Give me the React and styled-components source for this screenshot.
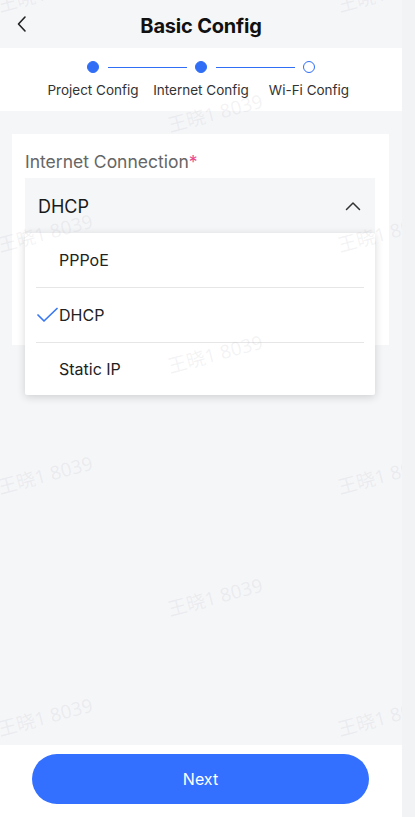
import styled, { createGlobalStyle } from "styled-components";

const GlobalStyle = createGlobalStyle`
  html, body {
    margin: 0;
    padding: 0;
    background: #f2f3f5;
  }
  body {
    font-family: Inter, "Noto Sans", "Noto Sans CJK SC", sans-serif;
    color: #1f1f1f;
  }
  * { box-sizing: border-box; }
`;

const Page = styled.div`
  position: relative;
  width: 402px;
  min-height: 817px;
  background: #f5f6f8;
  display: flex;
  flex-direction: column;
  overflow: hidden;
`;

const Header = styled.header`
  height: 48px;
  display: flex;
  align-items: center;
  justify-content: center;
  position: relative;
`;

const BackButton = styled.button`
  position: absolute;
  left: 10px;
  top: 12px;
  width: 24px;
  height: 24px;
  border: 0;
  background: none;
  padding: 0;
  display: flex;
  align-items: center;
  justify-content: center;
`;

const Title = styled.h1`
  margin: 4px 0 0;
  font-size: 20px;
  font-weight: 700;
  color: #111;
  letter-spacing: -0.2px;
`;

const StepsPanel = styled.div`
  height: 63px;
  background: #fff;
  display: flex;
  justify-content: center;
  padding-top: 13px;
`;

const Step = styled.div`
  width: 108px;
  display: flex;
  flex-direction: column;
  align-items: center;
  position: relative;
`;

const DotRow = styled.div`
  height: 12px;
  width: 100%;
  display: flex;
  align-items: center;
  justify-content: center;
  position: relative;
`;

const Dot = styled.span`
  width: 12px;
  height: 12px;
  border-radius: 50%;
  background: ${(p) => (p.$done ? "#2f6ef5" : "#fff")};
  border: 1.5px solid #2f6ef5;
`;

const Line = styled.span`
  position: absolute;
  left: 69px;
  width: 79px;
  top: 5.5px;
  height: 1.5px;
  background: #2f6ef5;
`;

const StepLabel = styled.span`
  margin-top: 9px;
  font-size: 13.5px;
  color: #333;
  white-space: nowrap;
`;

const Content = styled.main`
  flex: 1;
  padding: 23px 13px 0 12px;
`;

const Card = styled.section`
  background: #fff;
  padding: 16px 14px 111px 13px;
`;

const FieldLabel = styled.div`
  font-size: 17.5px;
  line-height: 24px;
  color: #666;
  margin-bottom: 4px;
`;

const Required = styled.span`
  color: #e84a8e;
`;

const SelectWrap = styled.div`
  position: relative;
`;

const SelectBox = styled.div`
  height: 56px;
  background: #f5f6f8;
  display: flex;
  align-items: center;
  justify-content: space-between;
  padding: 0 14px 0 13px;
  font-size: 18px;
  color: #1a1a1a;
`;

const Menu = styled.ul`
  position: absolute;
  top: 55px;
  left: 0;
  right: 0;
  margin: 0;
  padding: 0 11px;
  list-style: none;
  background: #fff;
  box-shadow: 0 2px 8px rgba(0, 0, 0, 0.16);
  border-radius: 2px;
  z-index: 2;
`;

const MenuItem = styled.li`
  height: ${(p) => (p.$last ? "52px" : "55px")};
  display: flex;
  align-items: center;
  padding-left: 23px;
  position: relative;
  font-size: 16px;
  color: #222;
  border-bottom: ${(p) => (p.$last ? "0" : "1px solid #e6e6e6")};
`;

const Check = styled.svg`
  position: absolute;
  left: 1px;
  top: 50%;
  margin-top: -8px;
`;

const BottomBar = styled.footer`
  height: 72px;
  background: #fff;
  display: flex;
  align-items: center;
  justify-content: center;
  padding-bottom: 4px;
  padding-right: 1px;
`;

const NextButton = styled.button`
  width: 337px;
  height: 50px;
  border: 0;
  border-radius: 25px;
  background: #3370ff;
  color: #fff;
  font-family: inherit;
  font-size: 16px;
`;

const Watermarks = styled.div`
  position: absolute;
  inset: 0;
  pointer-events: none;
  z-index: 5;
`;

const Mark = styled.span`
  position: absolute;
  font-size: 19px;
  color: rgba(160, 165, 175, 0.13);
  transform: translate(-50%, -50%) rotate(-15deg);
  white-space: nowrap;
  font-family: "Noto Sans", "Noto Sans CJK SC", sans-serif;
`;

const marks = [
  [45, -8], [385, -8],
  [215, 112],
  [45, 232], [385, 232],
  [215, 353],
  [45, 474], [385, 474],
  [215, 596],
  [45, 716], [385, 716],
];

const steps = [
  { label: "Project Config", done: true },
  { label: "Internet Config", done: true },
  { label: "Wi-Fi Config", done: false },
];

const options = ["PPPoE", "DHCP", "Static IP"];

export default function App() {
  return (
    <Page>
      <GlobalStyle />
      <Header>
        <BackButton aria-label="back">
          <svg width="14" height="18" viewBox="0 0 14 18" fill="none">
            <path d="M10 2 L3.5 9 L10 16" stroke="#222" strokeWidth="1.6" strokeLinecap="round" strokeLinejoin="round" />
          </svg>
        </BackButton>
        <Title>Basic Config</Title>
      </Header>

      <StepsPanel>
        {steps.map((s, i) => (
          <Step key={s.label}>
            <DotRow>
              <Dot $done={s.done} />
              {i < steps.length - 1 && <Line />}
            </DotRow>
            <StepLabel>{s.label}</StepLabel>
          </Step>
        ))}
      </StepsPanel>

      <Content>
        <Card>
          <FieldLabel>
            Internet Connection<Required>*</Required>
          </FieldLabel>
          <SelectWrap>
            <SelectBox>
              <span>DHCP</span>
              <svg width="16" height="10" viewBox="0 0 16 10" fill="none">
                <path d="M1.5 8.5 L8 2 L14.5 8.5" stroke="#333" strokeWidth="1.5" strokeLinecap="round" strokeLinejoin="round" />
              </svg>
            </SelectBox>
            <Menu>
              {options.map((o, i) => (
                <MenuItem key={o} $last={i === options.length - 1}>
                  {o === "DHCP" && (
                    <Check width="21" height="16" viewBox="0 0 21 16" fill="none">
                      <path d="M1 8 L7 14 L20 1.5" stroke="#3a78f2" strokeWidth="1.7" strokeLinecap="round" strokeLinejoin="round" />
                    </Check>
                  )}
                  {o}
                </MenuItem>
              ))}
            </Menu>
          </SelectWrap>
        </Card>
      </Content>

      <BottomBar>
        <NextButton>Next</NextButton>
      </BottomBar>

      <Watermarks>
        {marks.map(([x, y], i) => (
          <Mark key={i} style={{ left: x, top: y }}>
            王晓1 8039
          </Mark>
        ))}
      </Watermarks>
    </Page>
  );
}
